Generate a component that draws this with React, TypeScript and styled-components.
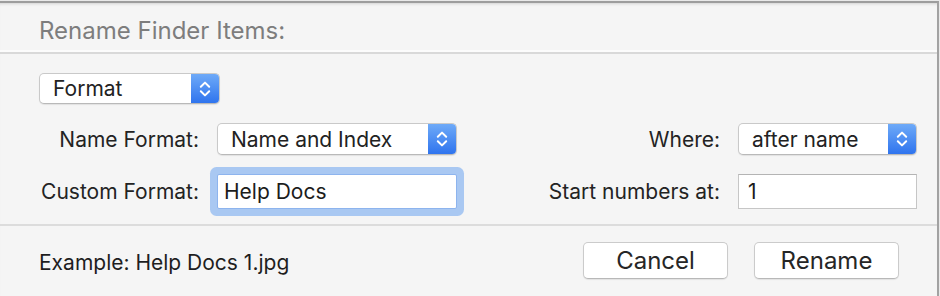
import React from "react";
import styled, { createGlobalStyle } from "styled-components";

const Global = createGlobalStyle`
  html, body { margin: 0; padding: 0; background: #e9e9e9; }
  * { box-sizing: border-box; }
`;

const Frame = styled.div`
  width: 940px;
  height: 296px;
  padding: 1px 1px 0 0;
  background: #e9e9e9;
  display: flex;
  font-family: Inter, "Liberation Sans", Arial, sans-serif;
  color: #232323;
`;

const Sheet = styled.div`
  flex: 1;
  display: flex;
  flex-direction: column;
  background: #f5f5f5;
  border-top: 2px solid #9d9d9d;
  border-right: 2px solid #a2a2a2;
  box-shadow: inset 0 3px 3px -2px rgba(0, 0, 0, 0.14);
`;

const Header = styled.div`
  height: 51px;
  padding: 6px 0 0 39px;
  display: flex;
  align-items: center;
  border-bottom: 2px solid #d9d9d9;
  box-shadow: inset 0 -2px 0 #fcfcfc;
`;

const Title = styled.div`
  font-size: 24px;
  color: #7d7d7d;
`;

const Body = styled.div`
  padding: 19px 20px 15px 39px;
  display: flex;
  flex-direction: column;
  gap: 19px;
`;

const Grid = styled.div`
  display: grid;
  grid-template-columns: 160px 240px 1fr 179px;
  grid-template-rows: 32px 35px;
  column-gap: 18px;
  row-gap: 19px;
  align-items: center;
`;

const Label = styled.div`
  font-size: 21px;
  text-align: right;
  white-space: nowrap;
`;

const PopupBox = styled.div<{ $w: number; $h: number }>`
  width: ${(p) => p.$w}px;
  height: ${(p) => p.$h}px;
  display: flex;
  align-items: stretch;
  background: #ffffff;
  border: 1px solid #c9c9c9;
  border-bottom-color: #b9b9b9;
  border-radius: 5px;
  box-shadow: 0 1px 1px rgba(0, 0, 0, 0.08);
  overflow: hidden;
`;

const PopupText = styled.div`
  flex: 1;
  display: flex;
  align-items: center;
  padding-left: 13px;
  font-size: 21px;
  color: #222;
  white-space: nowrap;
`;

const Stepper = styled.div`
  width: 28px;
  display: flex;
  align-items: center;
  justify-content: center;
  background: linear-gradient(#6eaaf8, #2f74ee);
`;

const Field = styled.div<{ $focused?: boolean }>`
  height: 35px;
  display: flex;
  align-items: center;
  padding-left: ${(p) => (p.$focused ? 6 : 9)}px;
  font-size: 21px;
  color: #1c1c1c;
  background: #ffffff;
  border: 1px solid ${(p) => (p.$focused ? "#8db4ee" : "#c6c6c6")};
  border-top-color: ${(p) => (p.$focused ? "#8db4ee" : "#b4b4b4")};
  border-radius: ${(p) => (p.$focused ? 2 : 0)}px;
  box-shadow: ${(p) => (p.$focused ? "0 0 0 7px #a9c8f2" : "none")};
`;

const Footer = styled.div`
  flex: 1;
  border-top: 2px solid #dcdcdc;
  padding: 16px 38px 17px 39px;
  display: flex;
  align-items: center;
  justify-content: space-between;
`;

const Example = styled.div`
  font-size: 21px;
  color: #1e1e1e;
  padding-top: 3px;
`;

const Buttons = styled.div`
  display: flex;
  gap: 26px;
`;

const Button = styled.button`
  width: 145px;
  height: 37px;
  background: #ffffff;
  border: 1px solid #cbcbcb;
  border-bottom-color: #b8b8b8;
  border-radius: 5px;
  box-shadow: 0 1px 1px rgba(0, 0, 0, 0.08);
  font-family: inherit;
  font-size: 24px;
  color: #262626;
  padding: 0;
`;

const Chevrons = () => (
  <svg width="12" height="18" viewBox="0 0 12 18" fill="none">
    <path d="M1.8 6.8 L6 2.6 L10.2 6.8" stroke="#fff" strokeWidth="2" strokeLinecap="round" strokeLinejoin="round" />
    <path d="M1.8 11.2 L6 15.4 L10.2 11.2" stroke="#fff" strokeWidth="2" strokeLinecap="round" strokeLinejoin="round" />
  </svg>
);

const Popup = ({ text, w, h }: { text: string; w: number; h: number }) => (
  <PopupBox $w={w} $h={h}>
    <PopupText>{text}</PopupText>
    <Stepper>
      <Chevrons />
    </Stepper>
  </PopupBox>
);

export default function App() {
  return (
    <>
      <Global />
      <Frame>
        <Sheet>
          <Header>
            <Title>Rename Finder Items:</Title>
          </Header>
          <Body>
            <Popup text="Format" w={181} h={31} />
            <Grid>
              <Label>Name Format:</Label>
              <Popup text="Name and Index" w={240} h={32} />
              <Label>Where:</Label>
              <Popup text="after name" w={179} h={32} />
              <Label>Custom Format:</Label>
              <Field $focused>Help Docs</Field>
              <Label>Start numbers at:</Label>
              <Field>1</Field>
            </Grid>
          </Body>
          <Footer>
            <Example>Example: Help Docs 1.jpg</Example>
            <Buttons>
              <Button>Cancel</Button>
              <Button>Rename</Button>
            </Buttons>
          </Footer>
        </Sheet>
      </Frame>
    </>
  );
}
